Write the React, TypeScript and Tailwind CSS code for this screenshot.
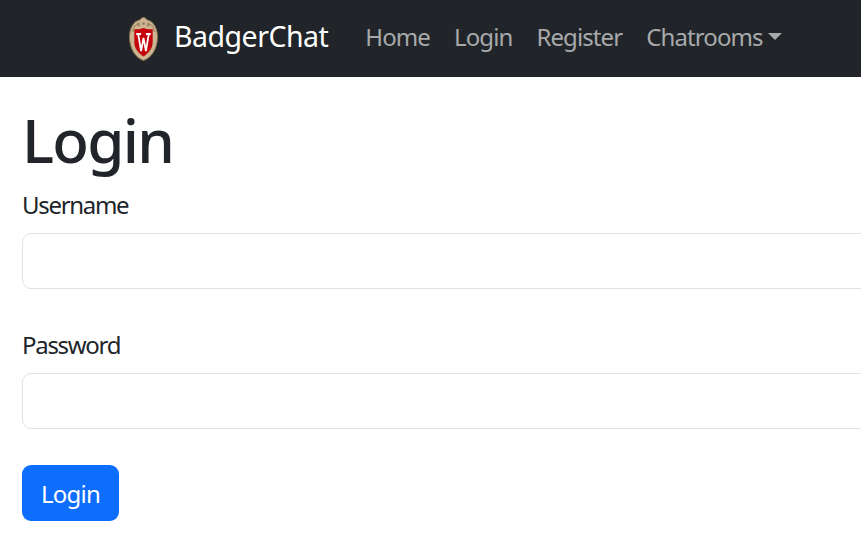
const font = "font-['Noto_Sans','Open_Sans',sans-serif]";

function Crest() {
  return (
    <svg width="29" height="44" viewBox="0 0 30 44" preserveAspectRatio="none" className="block">
      <path d="M15 0.5 C17 0.5 18 2 19 3 C25 4 29.5 11 29.5 20 C29.5 32 23 41 15 43.5 C7 41 0.5 32 0.5 20 C0.5 11 5 4 11 3 C12 2 13 0.5 15 0.5 Z" fill="#cdb592" stroke="#85704f" strokeWidth="1" />
      <path d="M4 15 C4 10 7 7 11 6 M26 15 C26 10 23 7 19 6" fill="none" stroke="#8d7856" strokeWidth="1" />
      <circle cx="10" cy="8" r="1.6" fill="#9c8763" />
      <circle cx="15" cy="6.5" r="1.6" fill="#9c8763" />
      <circle cx="20" cy="8" r="1.6" fill="#9c8763" />
      <path d="M5.5 12 C8 12.5 11 12.5 15 11 C19 12.5 22 12.5 24.5 12 V25 C24.5 32 20 36 15 39.5 C10 36 5.5 32 5.5 25 Z" fill="#c5050c" />
      <path d="M7.5 17 H12.5 M17.5 17 H22.5 M9.5 17 L12.5 34 L15 21 L17.5 34 L20.5 17" fill="none" stroke="#fff" strokeWidth="1.8" />
    </svg>
  );
}

function Field({ label }: { label: string }) {
  return (
    <div className="flex flex-col mb-[36px]">
      <label className="block mt-[1px] h-[36px] text-[24px] leading-[37px] tracking-[-1.3px] mb-[11px] text-[#212529]">{label}</label>
      <input type="text" className="block w-[1000px] h-[56px] bg-white border border-[#dee2e6] rounded-[9px]" />
    </div>
  );
}

export default function App() {
  return (
    <div className={`${font} min-h-[556px] w-[861px] overflow-hidden bg-white`}>
      <nav className="h-[77px] bg-[#212529] flex items-center pl-[129px]">
        <Crest />
        <span className="ml-[16px] pb-[4px] text-[28.5px] tracking-[-0.5px] text-white">BadgerChat</span>
        <div className="ml-[37px] pb-[4px] flex items-center gap-[24px] text-[24px] tracking-[-0.9px] text-[#a7a9ab]">
          <span>Home</span>
          <span>Login</span>
          <span>Register</span>
          <span className="flex items-center">
            Chatrooms
            <span className="ml-[5px] w-0 h-0 border-x-[7px] border-x-transparent border-t-[7px] border-t-[#a7a9ab]" />
          </span>
        </div>
      </nav>
      <main className="px-[22px]">
        <h1 className="mt-[22px] h-[86px] text-[60px] leading-[82px] font-medium tracking-[-1.7px] text-[#212529]">Login</h1>
        <Field label="Username" />
        <Field label="Password" />
        <button className="block w-[97px] h-[56px] rounded-[9px] bg-[#0d6efd] pt-[2px] text-white text-[24px] tracking-[-0.8px]">Login</button>
      </main>
    </div>
  );
}
